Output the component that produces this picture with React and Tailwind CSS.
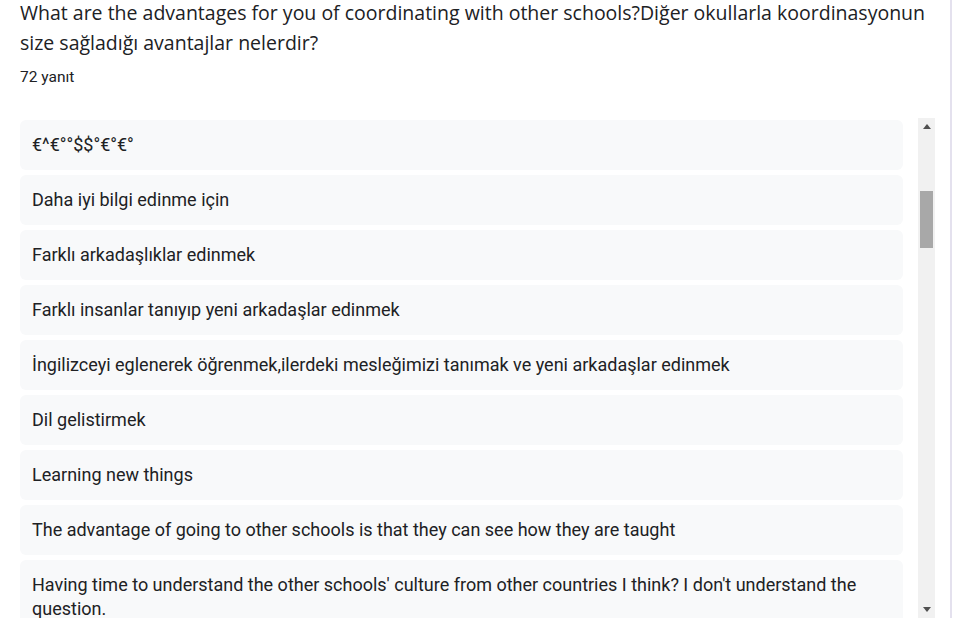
const answers = [
  "€^€°°$$°€°€°",
  "Daha iyi bilgi edinme için",
  "Farklı arkadaşlıklar edinmek",
  "Farklı insanlar tanıyıp yeni arkadaşlar edinmek",
  "İngilizceyi eglenerek öğrenmek,ilerdeki mesleğimizi tanımak ve yeni arkadaşlar edinmek",
  "Dil gelistirmek",
  "Learning new things",
  "The advantage of going to other schools is that they can see how they are taught",
  "Having time to understand the other schools' culture from other countries I think? I don't understand the question.",
  "Kültür alışverişi",
];

const App = () => {
  return (
    <div className="flex h-[618px] w-[954px] overflow-hidden bg-white text-[#202124]">
      <div className="flex w-[950px] flex-col pl-[20px]">
        <h2 className="mt-[-2px] text-[19.5px] leading-[30px] font-normal" style={{ fontFamily: '"Open Sans", "Liberation Sans", sans-serif' }}>
          <span className="block whitespace-nowrap">What are the advantages for you of coordinating with other schools?Diğer okullarla koordinasyonun</span>
          <span className="block whitespace-nowrap">size sağladığı avantajlar nelerdir?</span>
        </h2>
        <p className="mt-[9px] text-[15.5px] leading-[20px]" style={{ fontFamily: 'Roboto, "Liberation Sans", sans-serif' }}>
          72 yanıt
        </p>
        <div className="mt-[31px] flex h-[500px] gap-[15px]">
          <div className="h-[500px] w-[883px] overflow-hidden pt-[2px]">
            {answers.map((answer, index) => (
              <div
                key={index}
                className="mb-[5px] rounded-[6px] bg-[#f8f9fa] px-[12px] py-[13px] text-[18px] leading-[24px]"
                style={{ fontFamily: 'Roboto, "Liberation Sans", sans-serif' }}
              >
                {answer}
              </div>
            ))}
          </div>
          <div className="flex h-[500px] w-[17px] flex-col bg-[#f1f1f1]">
            <div className="flex h-[17px] items-center justify-center">
              <svg width="8" height="5" viewBox="0 0 8 5">
                <polygon points="4,0 8,5 0,5" fill="#505050" />
              </svg>
            </div>
            <div className="h-[56px]" />
            <div className="mx-[2px] h-[57px] bg-[#a8a8a8]" />
            <div className="flex-1" />
            <div className="flex h-[17px] items-center justify-center">
              <svg width="8" height="5" viewBox="0 0 8 5">
                <polygon points="0,0 8,0 4,5" fill="#505050" />
              </svg>
            </div>
          </div>
        </div>
      </div>
      <div className="h-full w-[2px] bg-[#e4e1ee]" />
    </div>
  );
};

export default App;
